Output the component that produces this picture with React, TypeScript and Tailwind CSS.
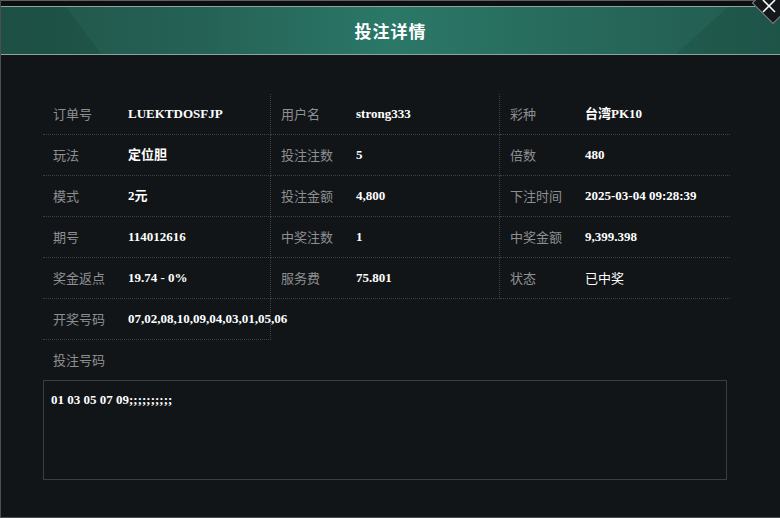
import React from 'react';

type Item = { label: string; value: string; plain?: boolean };

const rows: Item[][] = [
    [
        { label: '订单号', value: 'LUEKTDOSFJP' },
        { label: '用户名', value: 'strong333' },
        { label: '彩种', value: '台湾PK10' },
    ],
    [
        { label: '玩法', value: '定位胆' },
        { label: '投注注数', value: '5' },
        { label: '倍数', value: '480' },
    ],
    [
        { label: '模式', value: '2元' },
        { label: '投注金额', value: '4,800' },
        { label: '下注时间', value: '2025-03-04 09:28:39' },
    ],
    [
        { label: '期号', value: '114012616' },
        { label: '中奖注数', value: '1' },
        { label: '中奖金额', value: '9,399.398' },
    ],
    [
        { label: '奖金返点', value: '19.74 - 0%' },
        { label: '服务费', value: '75.801' },
        { label: '状态', value: '已中奖', plain: true },
    ],
];

function InfoCell({ item, last }: { item: Item; last?: boolean }) {
    return (
        <div
            className={`flex items-center h-[41px] pl-[10px] border-b border-dotted border-[#3d4044] ${last ? '' : 'border-r'}`}
        >
            <div className="w-[75px] shrink-0 text-[13px] text-[#8e8f91] font-['Noto_Sans_CJK_SC',sans-serif]">
                {item.label}
            </div>
            {item.plain ? (
                <div className="text-[13px] text-white font-['Noto_Sans_CJK_SC',sans-serif]">{item.value}</div>
            ) : (
                <div className="text-[13px] font-bold text-white whitespace-nowrap font-['Liberation_Serif','Noto_Sans_CJK_SC',serif]">
                    {item.value}
                </div>
            )}
        </div>
    );
}

export default function App() {
    return (
        <div className="w-[780px] h-[518px] bg-[#121518] border-l border-b border-[#4b4e52] flex flex-col overflow-hidden relative">
            {/* top strip */}
            <div className="h-[6px] bg-[#0c0e10] border-t border-[#5e6163] shrink-0"></div>

            {/* Header */}
            <div className="relative h-[49px] shrink-0 border-t border-b border-[#8da59f] bg-[linear-gradient(90deg,#215549_0%,#256155_25%,#2b7868_50%,#27695b_75%,#225a4e_100%)] flex items-center justify-center">
                <div className="absolute inset-0 bg-[#10302a]/15 [clip-path:polygon(0_0,65px_0,100px_100%,0_100%)]"></div>
                <div className="absolute inset-0 bg-[#10302a]/15 [clip-path:polygon(calc(100%-52px)_0,100%_0,100%_100%,calc(100%-104px)_100%)]"></div>
                <h1 className="relative text-[17px] font-bold text-white tracking-[1px] font-['Noto_Sans_CJK_SC',sans-serif]">
                    投注详情
                </h1>
            </div>

            {/* Close button */}
            <div className="absolute -top-[12px] -right-[8px] w-[30px] h-[30px] rotate-45 bg-[#15181b] border border-[#7d8a88]"></div>
            <svg className="absolute top-0 right-0" width="24" height="18" viewBox="0 0 24 18">
                <path d="M7 0 L19 12 M19 0 L7 12" stroke="#ffffff" strokeWidth="1.6" fill="none" />
            </svg>

            {/* Body */}
            <div className="flex-1 pl-[42px] pr-[50px] pt-[39px]">
                <div className="grid grid-cols-[228px_229px_230px]">
                    {rows.map((row, i) =>
                        row.map((item, j) => <InfoCell key={`${i}-${j}`} item={item} last={j === 2} />)
                    )}
                    <InfoCell item={{ label: '开奖号码', value: '07,02,08,10,09,04,03,01,05,06' }} />
                </div>

                <div className="h-[40px] flex items-center pl-[10px] text-[13px] text-[#8e8f91] font-['Noto_Sans_CJK_SC',sans-serif]">
                    投注号码
                </div>
                <div className="w-[684px] h-[100px] border border-[#3a3d41] px-[7px] py-[9px] text-[13px] font-bold text-white font-['Liberation_Serif',serif]">
                    01 03 05 07 09;;;;;;;;;;
                </div>
            </div>
        </div>
    );
}
